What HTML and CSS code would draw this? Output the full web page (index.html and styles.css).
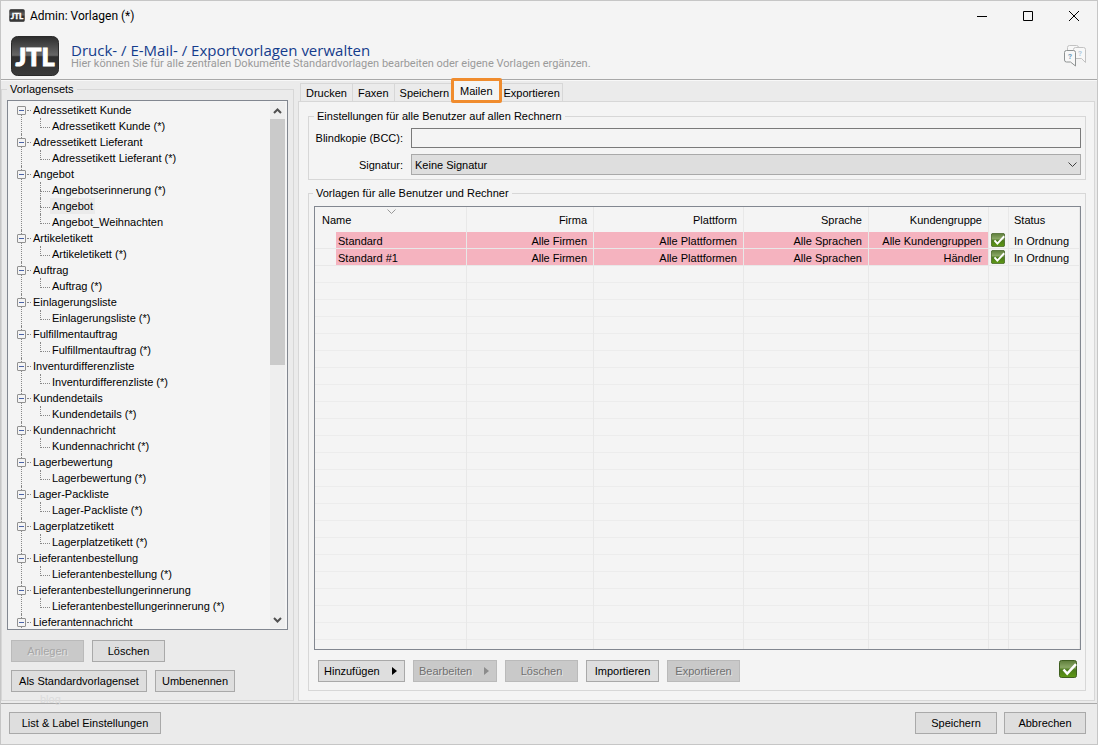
FILE: index.html
```html
<!DOCTYPE html>
<html lang="de">
<head>
  <meta charset="UTF-8">
  <title>Admin: Vorlagen (*)</title>
  <link rel="stylesheet" href="styles.css">
</head>
<body>

  <!-- Symbole -->
  <svg class="symbols" aria-hidden="true">
    <defs>
      <linearGradient id="logoFill" x1="0" y1="0" x2="0" y2="1">
        <stop offset="0" stop-color="#2c2c2c"/>
        <stop offset="0.48" stop-color="#666"/>
        <stop offset="0.52" stop-color="#2e2e2e"/>
        <stop offset="1" stop-color="#3a3a3a"/>
      </linearGradient>
      <linearGradient id="checkFill" x1="0" y1="0" x2="0" y2="1">
        <stop offset="0" stop-color="#5d7d3a"/>
        <stop offset="0.4" stop-color="#8aa765"/>
        <stop offset="0.55" stop-color="#4b7a1c"/>
        <stop offset="1" stop-color="#5f9a14"/>
      </linearGradient>
    </defs>
    <symbol id="logo" viewBox="0 0 48 40">
      <rect x="0.5" y="0.5" width="47" height="39" rx="6" fill="url(#logoFill)" stroke="#2a2a2a"/>
      <text class="logo-text" x="24" y="30">JTL</text>
    </symbol>
    <symbol id="check" viewBox="0 0 18 18">
      <rect x="0.5" y="0.5" width="17" height="17" rx="2" fill="url(#checkFill)" stroke="#3f5f20"/>
      <path d="M4.5 9.5l3.7 4.2L17 4.2" fill="none" stroke="#fff" stroke-width="2.5"/>
    </symbol>
  </svg>

  <!-- Titelleiste -->
  <div class="titlebar">
    <svg class="titlebar-icon"><use href="#logo"/></svg>
    <span class="titlebar-text">Admin: Vorlagen (*)</span>
    <button class="win-button" aria-label="Minimieren"><svg width="10" height="10"><path d="M0 5.5h10"/></svg></button>
    <button class="win-button" aria-label="Maximieren"><svg width="10" height="10"><path d="M0.5 0.5h9v9h-9z"/></svg></button>
    <button class="win-button" aria-label="Schließen"><svg width="10" height="10"><path d="M0 0l10 10M10 0L0 10"/></svg></button>
  </div>

  <!-- Kopfbereich -->
  <header class="header">
    <svg class="header-logo"><use href="#logo"/></svg>
    <div class="header-text">
      <h1>Druck- / E-Mail- / Exportvorlagen verwalten</h1>
      <p>Hier können Sie für alle zentralen Dokumente Standardvorlagen bearbeiten oder eigene Vorlagen ergänzen.</p>
    </div>
    <button class="help-button" aria-label="Hilfe">
      <svg width="24" height="24" viewBox="0 0 24 24">
        <g fill="#f8f8f8" stroke="#c2c2c2">
          <path d="M4.500 6V3.500q0-2 2-2h7q2 0 2 2V6"/>
          <path d="M12.500 3.500h8q2 0 2 2v13l-4-4h-6q-2 0-2-2v-7q0-2 2-2z"/>
        </g>
        <path d="M3.500 6.500h7q2 0 2 2v13.500l-5-4h-4q-2 0-2-2v-7.500q0-2 2-2z" fill="#f8f8f8" stroke="#8e9292"/>
        <text x="5" y="15" class="help-mark">?</text>
        <text x="15" y="12" class="help-mark help-mark-light">?</text>
      </svg>
    </button>
  </header>

  <main class="content">

    <!-- Vorlagensets -->
    <fieldset class="group sets">
      <legend>Vorlagensets</legend>
      <div class="tree-box">
        <ul class="tree">
          <li><button class="toggle" aria-label="Zuklappen"></button>Adressetikett Kunde
            <ul><li><span>Adressetikett Kunde (*)</span></li></ul></li>
          <li><button class="toggle" aria-label="Zuklappen"></button>Adressetikett Lieferant
            <ul><li><span>Adressetikett Lieferant (*)</span></li></ul></li>
          <li><button class="toggle" aria-label="Zuklappen"></button>Angebot
            <ul>
              <li><span>Angebotserinnerung (*)</span></li>
              <li><span class="selected">Angebot</span></li>
              <li><span>Angebot_Weihnachten</span></li>
            </ul></li>
          <li><button class="toggle" aria-label="Zuklappen"></button>Artikeletikett
            <ul><li><span>Artikeletikett (*)</span></li></ul></li>
          <li><button class="toggle" aria-label="Zuklappen"></button>Auftrag
            <ul><li><span>Auftrag (*)</span></li></ul></li>
          <li><button class="toggle" aria-label="Zuklappen"></button>Einlagerungsliste
            <ul><li><span>Einlagerungsliste (*)</span></li></ul></li>
          <li><button class="toggle" aria-label="Zuklappen"></button>Fulfillmentauftrag
            <ul><li><span>Fulfillmentauftrag (*)</span></li></ul></li>
          <li><button class="toggle" aria-label="Zuklappen"></button>Inventurdifferenzliste
            <ul><li><span>Inventurdifferenzliste (*)</span></li></ul></li>
          <li><button class="toggle" aria-label="Zuklappen"></button>Kundendetails
            <ul><li><span>Kundendetails (*)</span></li></ul></li>
          <li><button class="toggle" aria-label="Zuklappen"></button>Kundennachricht
            <ul><li><span>Kundennachricht (*)</span></li></ul></li>
          <li><button class="toggle" aria-label="Zuklappen"></button>Lagerbewertung
            <ul><li><span>Lagerbewertung (*)</span></li></ul></li>
          <li><button class="toggle" aria-label="Zuklappen"></button>Lager-Packliste
            <ul><li><span>Lager-Packliste (*)</span></li></ul></li>
          <li><button class="toggle" aria-label="Zuklappen"></button>Lagerplatzetikett
            <ul><li><span>Lagerplatzetikett (*)</span></li></ul></li>
          <li><button class="toggle" aria-label="Zuklappen"></button>Lieferantenbestellung
            <ul><li><span>Lieferantenbestellung (*)</span></li></ul></li>
          <li><button class="toggle" aria-label="Zuklappen"></button>Lieferantenbestellungerinnerung
            <ul><li><span>Lieferantenbestellungerinnerung (*)</span></li></ul></li>
          <li><button class="toggle" aria-label="Zuklappen"></button>Lieferantennachricht</li>
        </ul>
        <div class="scrollbar">
          <button class="scroll-button" aria-label="Nach oben"><svg width="9" height="6"><path d="M1 5l3.500-3.500L8 5"/></svg></button>
          <div class="scroll-track"><div class="scroll-thumb"></div></div>
          <button class="scroll-button" aria-label="Nach unten"><svg width="9" height="6"><path d="M1 1l3.500 3.500L8 1"/></svg></button>
        </div>
      </div>
      <div class="button-row">
        <button class="btn btn-ghost" disabled>Anlegen</button>
        <button class="btn">Löschen</button>
      </div>
      <div class="button-row">
        <button class="btn btn-set">Als Standardvorlagenset</button>
        <button class="btn btn-rename">Umbenennen</button>
      </div>
      <span class="watermark">blog</span>
    </fieldset>

    <!-- Reiter -->
    <section class="tabs">
      <div class="tab-bar" role="tablist">
        <button class="tab" role="tab">Drucken</button>
        <button class="tab" role="tab">Faxen</button>
        <button class="tab" role="tab">Speichern</button>
        <button class="tab tab-active" role="tab" aria-selected="true">Mailen</button>
        <button class="tab" role="tab">Exportieren</button>
      </div>

      <div class="tab-page">
        <fieldset class="group settings">
          <legend>Einstellungen für alle Benutzer auf allen Rechnern</legend>
          <label for="bcc">Blindkopie (BCC):</label>
          <input type="text" id="bcc">
          <label for="signatur">Signatur:</label>
          <div class="select-wrap">
            <select id="signatur"><option>Keine Signatur</option></select>
            <svg width="9" height="6"><path d="M0.500 0.500l4 4 4-4"/></svg>
          </div>
        </fieldset>

        <fieldset class="group templates">
          <legend>Vorlagen für alle Benutzer und Rechner</legend>
          <div class="table-box">
            <table>
              <colgroup>
                <col class="col-name">
                <col class="col-firma">
                <col class="col-plattform">
                <col class="col-sprache">
                <col class="col-gruppe">
                <col class="col-icon">
                <col class="col-status">
              </colgroup>
              <thead>
                <tr>
                  <th class="name-head">Name<svg class="sort" width="9" height="5"><path d="M0.500 0.500l4 4 4-4"/></svg></th>
                  <th>Firma</th>
                  <th>Plattform</th>
                  <th>Sprache</th>
                  <th>Kundengruppe</th>
                  <th></th>
                  <th class="left">Status</th>
                </tr>
              </thead>
              <tbody>
                <tr>
                  <td class="name">Standard</td>
                  <td class="pink">Alle Firmen</td>
                  <td class="pink">Alle Plattformen</td>
                  <td class="pink">Alle Sprachen</td>
                  <td class="pink">Alle Kundengruppen</td>
                  <td class="icon"><svg><use href="#check"/></svg></td>
                  <td class="left">In Ordnung</td>
                </tr>
                <tr>
                  <td class="name">Standard #1</td>
                  <td class="pink">Alle Firmen</td>
                  <td class="pink">Alle Plattformen</td>
                  <td class="pink">Alle Sprachen</td>
                  <td class="pink">Händler</td>
                  <td class="icon"><svg><use href="#check"/></svg></td>
                  <td class="left">In Ordnung</td>
                </tr>
                <tr class="filler"><td></td><td></td><td></td><td></td><td></td><td></td><td></td></tr>
              </tbody>
            </table>
          </div>
          <div class="button-row actions">
            <button class="btn btn-menu">Hinzufügen<svg width="5" height="8"><path d="M0 0l5 4-5 4z"/></svg></button>
            <button class="btn btn-menu" disabled>Bearbeiten<svg width="5" height="8"><path d="M0 0l5 4-5 4z"/></svg></button>
            <button class="btn" disabled>Löschen</button>
            <button class="btn">Importieren</button>
            <button class="btn" disabled>Exportieren</button>
            <svg class="ok-icon"><use href="#check"/></svg>
          </div>
        </fieldset>
      </div>
    </section>
  </main>

  <!-- Fußzeile -->
  <footer class="footer">
    <button class="btn btn-label">List &amp; Label Einstellungen</button>
    <button class="btn btn-footer">Speichern</button>
    <button class="btn btn-footer">Abbrechen</button>
  </footer>

</body>
</html>
```
FILE: styles.css
```css
* {
  box-sizing: border-box;
}

body {
  margin: 0;
  height: 100vh;
  display: flex;
  flex-direction: column;
  border: 1px solid #c6c6c6;
  background: #ebebeb;
  color: #000;
  font-family: "Liberation Sans", Arial, sans-serif;
  font-size: 11px;
  line-height: 14px;
}

button, input, select {
  font: inherit;
  color: inherit;
  margin: 0;
  padding: 0;
}

svg {
  flex: none;
}

.symbols {
  position: absolute;
  width: 0;
  height: 0;
}

.logo-text {
  font-family: Lato, sans-serif;
  font-size: 25px;
  font-weight: 900;
  text-anchor: middle;
  fill: #fff;
  stroke: #fff;
}

/* Titelleiste */
.titlebar {
  display: flex;
  align-items: center;
  height: 29px;
  padding-left: 8px;
  background: #f4f4f4;
  font-family: Roboto, sans-serif;
}

.titlebar-icon {
  width: 16px;
  height: 13px;
  margin-right: 5px;
}

.titlebar-text {
  flex: 1;
  font-size: 12px;
}

.win-button {
  width: 46px;
  height: 29px;
  border: none;
  background: none;
}

.win-button svg {
  display: block;
  margin: auto;
}

.win-button path {
  fill: none;
  stroke: #000;
}

/* Kopfbereich */
.header {
  display: flex;
  align-items: center;
  height: 50px;
  padding: 3px 10px 0;
  background: #f4f4f4;
  border-bottom: 1px solid #a8a8a8;
  font-family: Roboto, sans-serif;
}

.header-logo {
  width: 48px;
  height: 40px;
}

.header-text {
  flex: 1;
  margin-left: 12px;
}

.header h1 {
  margin: 0;
  color: #143c8c;
  font-family: "Open Sans", sans-serif;
  font-size: 15px;
  line-height: 16px;
  font-weight: normal;
}

.header p {
  margin: 0;
  color: #9a9a9a;
  font-size: 11px;
  line-height: 12px;
}

.help-button {
  height: 24px;
  border: none;
  background: none;
}

.help-mark {
  fill: #6f9dbd;
  font-size: 8px;
  font-weight: bold;
}

.help-mark-light {
  fill: #b4cbdc;
}

/* Hauptbereich */
.content {
  flex: 1;
  min-height: 0;
  display: flex;
  gap: 4px;
  padding: 1px 2px 2px 0;
  border-top: 1px solid #f8f8f8;
}

.group {
  min-width: 0;
  margin: 0;
  padding: 0;
  border: 1px solid #d7d7d7;
}

.group legend {
  padding: 0 3px;
}

.sets {
  position: relative;
  display: flex;
  flex-direction: column;
  width: 293px;
  padding: 4px 5px 8px;
}

.tree-box {
  flex: 1;
  min-height: 0;
  display: flex;
  overflow: hidden;
  margin-bottom: 10px;
  padding: 1px 2px 1px 0;
  border: 1px solid #828790;
  background: #f4f4f4;
}

.tree {
  flex: 1;
  margin: 0;
  padding: 0 0 0 8px;
  list-style: none;
  line-height: 16px;
  white-space: nowrap;
}

.tree > li {
  position: relative;
  padding-left: 17px;
}

.tree > li::before {
  content: "";
  position: absolute;
  left: 5px;
  top: 0;
  bottom: 0;
  border-left: 1px dotted #888;
}

.tree > li:first-child::before {
  top: 8px;
}

.tree > li::after {
  content: "";
  position: absolute;
  left: 11px;
  top: 8px;
  width: 4px;
  border-top: 1px dotted #888;
}

.toggle {
  position: absolute;
  left: 1px;
  top: 4px;
  z-index: 1;
  width: 9px;
  height: 9px;
  border: 1px solid #919191;
  border-radius: 1px;
  background: linear-gradient(#4b63a7, #4b63a7) center / 5px 1px no-repeat #f4f4f4;
}

.tree ul {
  margin: 0;
  padding: 0;
  list-style: none;
}

.tree ul li {
  position: relative;
  padding-left: 17px;
}

.tree ul li::before {
  content: "";
  position: absolute;
  left: 7px;
  top: 0;
  width: 9px;
  height: 9px;
  border-left: 1px dotted #888;
  border-bottom: 1px dotted #888;
}

.tree ul li:not(:last-child)::after {
  content: "";
  position: absolute;
  left: 7px;
  top: 8px;
  bottom: 0;
  border-left: 1px dotted #888;
}

.tree span {
  display: block;
  width: fit-content;
  padding: 0 2px;
}

.tree .selected {
  background: #ebebeb;
}

.scrollbar {
  display: flex;
  flex-direction: column;
  width: 15px;
  background: #eee;
}

.scroll-button {
  height: 17px;
  border: none;
  background: none;
}

.scroll-button svg {
  display: block;
  margin: auto;
}

.scroll-button path {
  fill: none;
  stroke: #505050;
  stroke-width: 2;
}

.scroll-track {
  flex: 1;
}

.scroll-thumb {
  height: 50%;
  background: #cacaca;
}

/* Schaltflächen */
.button-row {
  display: flex;
  gap: 8px;
}

.sets .button-row {
  padding-left: 4px;
}

.sets .button-row + .button-row {
  margin-top: 8px;
}

.btn {
  width: 73px;
  height: 22px;
  border: 1px solid #a9a9a9;
  background: #dedede;
  white-space: nowrap;
}

.btn:disabled {
  border-color: #bababa;
  background: #c9c9c9;
  color: #707070;
  text-shadow: 1px 1px #e4e4e4;
}

.btn-ghost:disabled {
  color: #a6a6a6;
}

.btn-set {
  width: 136px;
}

.btn-rename {
  width: 80px;
}

.btn-menu {
  display: flex;
  align-items: center;
  justify-content: space-between;
  width: 87px;
  padding: 0 7px 0 5px;
}

.btn-menu:disabled {
  width: 84px;
}

.btn:disabled path {
  fill: #8c8c8c;
}

.watermark {
  position: absolute;
  left: 38px;
  bottom: -6px;
  color: #dcdcdc;
}

/* Reiter */
.tabs {
  flex: 1;
  min-width: 0;
  display: flex;
  flex-direction: column;
}

.tab-bar {
  display: flex;
  padding: 1px 0 0 2px;
}

.tab {
  height: 18px;
  padding: 0 5px;
  border: 1px solid #d7d7d7;
  border-width: 1px 1px 0 0;
  background: #ebebeb;
}

.tab:first-child {
  border-left-width: 1px;
}

.tab-active {
  position: relative;
  z-index: 1;
  height: 25px;
  margin: -5px 0 -2px -4px;
  padding: 0 6px;
  border: 3px solid #f08c2e;
  border-radius: 2px;
  background: #f4f4f4;
}

.tab-active + .tab {
  padding: 0 2px;
}

.tab-page {
  flex: 1;
  display: flex;
  flex-direction: column;
  gap: 6px;
  padding: 7px 8px 9px 9px;
  border: 1px solid #d7d7d7;
  background: #f4f4f4;
}

.settings {
  display: grid;
  grid-template-columns: 90px 1fr;
  align-items: center;
  gap: 6px;
  padding: 5px 4px 4px 6px;
}

.settings legend,
.templates legend {
  margin-left: -1px;
}

.settings label {
  padding-right: 2px;
  text-align: right;
  white-space: nowrap;
}

.settings input {
  width: 100%;
  height: 20px;
  padding: 0 3px;
  border: 1px solid #7a7a7a;
  background: #f4f4f4;
}

.select-wrap {
  position: relative;
}

.select-wrap select {
  display: block;
  width: 100%;
  height: 21px;
  padding: 0 3px;
  border: 1px solid #a9a9a9;
  border-radius: 0;
  background: #dedede;
  appearance: none;
}

.select-wrap svg {
  position: absolute;
  right: 4px;
  top: 8px;
  fill: none;
  stroke: #404040;
  pointer-events: none;
}

.templates {
  flex: 1;
  display: flex;
  flex-direction: column;
  padding: 6px 4px 8px 5px;
}

/* Tabelle */
.table-box {
  flex: 1;
  display: flex;
  border: 1px solid #828790;
}

table {
  width: 100%;
  table-layout: fixed;
  border-collapse: separate;
  border-spacing: 0;
}

.col-name { width: 152px; }
.col-firma { width: 127px; }
.col-plattform { width: 150px; }
.col-sprache { width: 125px; }
.col-gruppe { width: 120px; }
.col-icon { width: 20px; }
.col-status { width: 71px; }

th, td {
  padding: 0 6px 0 0;
  border-right: 1px solid #e8e8e8;
  text-align: right;
  font-weight: normal;
  white-space: nowrap;
}

th {
  position: relative;
  height: 25px;
}

td {
  height: 17px;
  padding-top: 1px;
  border-bottom: 1px solid #e8e8e8;
}

.left {
  padding-left: 5px;
  text-align: left;
}

.name-head {
  padding-left: 7px;
  text-align: left;
}

.sort {
  position: absolute;
  left: 72px;
  top: 2px;
  fill: none;
  stroke: #999;
}

.name {
  padding-left: 23px;
  text-align: left;
  background: linear-gradient(90deg, #f4f4f4 21px, #f5b3bf 21px);
}

.pink {
  background: #f5b3bf;
}

.icon {
  padding: 0 3px 0 2px;
}

.icon svg {
  display: block;
  width: 14px;
  height: 14px;
}

.filler td {
  height: auto;
  border-bottom: none;
  background: repeating-linear-gradient(transparent 0 16px, #ececec 16px 17px);
}

.actions {
  padding: 10px 4px 0;
}

.ok-icon {
  width: 18px;
  height: 18px;
  margin-left: auto;
}

/* Fußzeile */
.footer {
  display: flex;
  gap: 7px;
  height: 41px;
  padding: 8px 11px 0 8px;
  border-top: 1px solid #a8a8a8;
}

.btn-label {
  width: 152px;
  margin-right: auto;
}

.btn-footer {
  width: 82px;
}
```
